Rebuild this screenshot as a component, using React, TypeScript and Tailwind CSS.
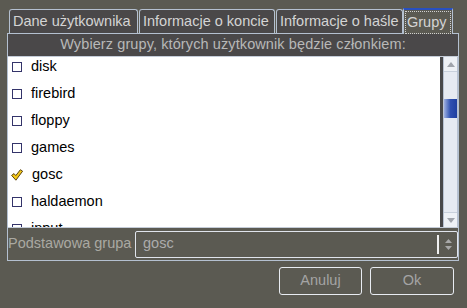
import React from "react";

const font = { fontFamily: '"Liberation Sans", Arial, sans-serif' };

function Box() {
  return <div className="w-[10px] h-[10px] border border-[#34346a] bg-white shrink-0" />;
}

function Check() {
  return (
    <svg width="12" height="12" viewBox="0 0 12 12" className="shrink-0 -ml-[1px]">
      <path d="M0.6 6.4 L3 4.6 L4.8 6.6 L9.4 0.7 L11.6 2.2 L4.9 11.2 Z" fill="#f4c81a" stroke="#5a4410" strokeWidth="1" strokeLinejoin="round" />
    </svg>
  );
}

const items: { name: string; checked?: boolean }[] = [
  { name: "disk" },
  { name: "firebird" },
  { name: "floppy" },
  { name: "games" },
  { name: "gosc", checked: true },
  { name: "haldaemon" },
  { name: "input" },
];

export default function App() {
  return (
    <div className="w-[467px] h-[308px] bg-[#5b5a52] overflow-hidden text-[14.5px]" style={font}>
      {/* tabs */}
      <div className="flex items-end pl-[9px] pt-[8px] h-[33px]">
        <div className="w-[129px] h-[24px] rounded-t-[3px] border border-b-0 border-[#b4c0d0] bg-[#4a4849] text-[#d4d4d4] pl-[3px] leading-[22px] whitespace-nowrap">
          Dane użytkownika
        </div>
        <div className="ml-[1px] w-[136px] h-[24px] rounded-t-[3px] border border-b-0 border-[#b4c0d0] bg-[#4a4849] text-[#d4d4d4] pl-[3px] leading-[22px] whitespace-nowrap">
          Informacje o koncie
        </div>
        <div className="ml-[1px] w-[127px] h-[24px] rounded-t-[3px] border border-b-0 border-[#b4c0d0] bg-[#4a4849] text-[#d4d4d4] pl-[3px] leading-[22px] whitespace-nowrap">
          Informacje o haśle
        </div>
        <div className="relative z-10 -mb-[1px] w-[50px] h-[26px] border-t-2 border-x border-t-[#2850c0] border-x-[#b4c0d0] bg-[#5b5a52] text-[#d4d4d4] px-[1px] pt-[1px]">
          <div className="h-[23px] border border-dotted border-[#d0d0d0] leading-[20px] px-[1px] whitespace-nowrap">Grupy</div>
        </div>
      </div>

      {/* panel */}
      <div className="ml-[7px] w-[452px] h-[228px] border border-[#b4c0d0] flex flex-col">
        <div className="h-[22px] bg-[#4a4849] text-[#b8b8b8] text-center leading-[21px] tracking-[0.1px] whitespace-nowrap shrink-0">
          Wybierz grupy, których użytkownik będzie członkiem:
        </div>
        <div className="h-[172px] border-y border-[#c4ccd8] flex shrink-0">
          <div className="flex-1 bg-white overflow-hidden">
            <div className="-mt-[4px] flex flex-col">
              {items.map((it) => (
                <div key={it.name} className="h-[27px] flex items-center pl-[4px] gap-[9px] text-[14.5px] text-black">
                  {it.checked ? <Check /> : <Box />}
                  <span className="leading-none">{it.name}</span>
                </div>
              ))}
            </div>
          </div>
          <div className="w-[3px] bg-[#48484a]" />
          <div className="w-[15px] bg-[#e6eaf2] border-x border-[#b8c2d2] flex flex-col">
            <div className="h-[15px] border-b border-[#c8d0dc] bg-[#eef1f6] flex items-center justify-center">
              <svg width="8" height="5" viewBox="0 0 8 5"><path d="M0 5 L4 0 L8 5 Z" fill="#a0a4ac" /></svg>
            </div>
            <div className="flex-1 relative">
              <div className="absolute left-0 right-0 top-[27px] h-[19px] bg-gradient-to-r from-[#a0b0e0] via-[#2f4fb0] to-[#2040a0]" />
            </div>
            <div className="h-[15px] border-t border-[#c8d0dc] bg-[#eef1f6] flex items-center justify-center">
              <svg width="8" height="5" viewBox="0 0 8 5"><path d="M0 0 L4 5 L8 0 Z" fill="#a0a4ac" /></svg>
            </div>
          </div>
        </div>
        <div className="flex-1 flex items-center">
          <div className="w-[127px] text-[#aaa9a2] whitespace-nowrap">Podstawowa grupa</div>
          <div className="flex-1 h-[27px] border border-[#e0e4ec] rounded-[2px] flex items-center">
            <div className="flex-1 pl-[7px] text-[#acacac]">gosc</div>
            <div className="w-[2px] h-[19px] bg-[#f0f0f0]" />
            <div className="w-[18px] flex flex-col items-center gap-[3px]">
              <svg width="7" height="4" viewBox="0 0 7 4"><path d="M0 4 L3.5 0 L7 4 Z" fill="#a8a8a8" /></svg>
              <svg width="7" height="4" viewBox="0 0 7 4"><path d="M0 0 L3.5 4 L7 0 Z" fill="#a8a8a8" /></svg>
            </div>
          </div>
        </div>
      </div>

      {/* buttons */}
      <div className="flex justify-end gap-[8px] pr-[13px] mt-[6px]">
        <div className="w-[83px] h-[28px] border border-[#e8ecf2] rounded-[3px] flex items-center justify-center text-[#a4a4a4]">Anuluj</div>
        <div className="w-[84px] h-[28px] border border-[#e8ecf2] rounded-[3px] flex items-center justify-center text-[#a4a4a4]">Ok</div>
      </div>
    </div>
  );
}
